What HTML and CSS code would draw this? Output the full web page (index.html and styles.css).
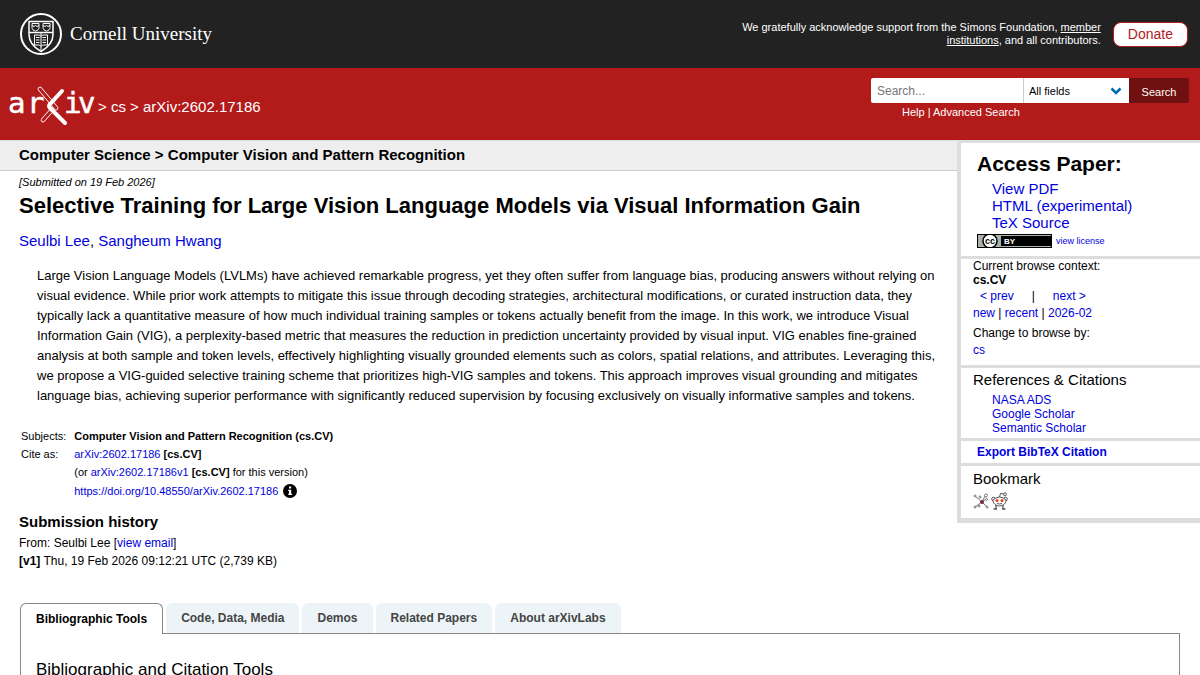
FILE: index.html
```
<!DOCTYPE html>
<html lang="en">
<head>
    <meta charset="UTF-8">
    <meta name="viewport" content="width=device-width, initial-scale=1">
    <title>[2602.17186] Selective Training for Large Vision Language Models via Visual Information Gain</title>
    <link rel="stylesheet" href="styles.css">
</head>
<body>
    <header>
        <div class="support-bar">
            <a class="cornell" href="#">
                <svg width="42" height="42" viewBox="0 0 42 42" fill="none" stroke="#fff" aria-hidden="true">
                    <circle cx="21" cy="21" r="20" stroke-width="2"/>
                    <path d="M9 8.500h24v13c0 8-5 13-12 17-7-4-12-9-12-17z" stroke-width="1.500"/>
                    <path d="M9 19.500h24" stroke-width="1.500"/>
                    <path d="M12 10.500h7v4c0 2-1.500 3-3.500 3.500-2-.5-3.500-1.500-3.500-3.500zM23 10.500h7v4c0 2-1.500 3-3.500 3.500-2-.5-3.500-1.500-3.500-3.500z"/>
                    <path d="M12 12.500l2 1 1.500-1 1.500 1 2-1M23 12.500l2 1 1.500-1 1.500 1 2-1"/>
                    <path d="M14.500 22h5l1.500 1.500 1.500-1.500h5v10h-5L21 33.500 19.500 32h-5zM21 19.500v18"/>
                    <path d="M16 24.500h3.500M16 27h3.500M16 29.500h3.500M22.500 24.500H26M22.500 27H26M22.500 29.500H26"/>
                </svg>
                <span>Cornell University</span>
            </a>
            <p class="support">We gratefully acknowledge support from the Simons Foundation, <a href="#">member institutions</a>, and all contributors.</p>
            <a class="donate" href="#">Donate</a>
        </div>
        <div class="banner">
            <div class="breadcrumbs">
                <a class="logo" href="#" aria-label="arXiv">
                    <svg width="86" height="40" viewBox="0 0 86 40">
                        <g fill="none" stroke-linecap="round">
                            <path d="M31 3L47 22" stroke="#fff" stroke-width="4.500"/>
                            <path d="M31 3L47 22" stroke="#b31b1b" stroke-width="3"/>
                            <path d="M34 34L43 24" stroke="#fff" stroke-width="4.500"/>
                            <path d="M34 34L43 24" stroke="#b31b1b" stroke-width="3"/>
                            <path d="M53 5L41 18Q39 20 41 22L56 37" stroke="#fff" stroke-width="4"/>
                        </g>
                        <text x="-1 18" y="27">ar</text>
                        <text x="55 69" y="27">iv</text>
                    </svg>
                </a>
                <span>&gt; <a href="#">cs</a> &gt; arXiv:2602.17186</span>
            </div>
            <form class="search" onsubmit="return false">
                <div class="search-row">
                    <input type="text" placeholder="Search..." aria-label="Search term">
                    <div class="select">
                        <select aria-label="Field to search">
                            <option>All fields</option>
                            <option>Title</option>
                            <option>Author</option>
                            <option>Abstract</option>
                        </select>
                        <svg width="12" height="8" viewBox="0 0 12 8" aria-hidden="true"><path d="M1.500 1.500L6 6l4.500-4.500" fill="none" stroke="#0068ac" stroke-width="2.500"/></svg>
                    </div>
                    <button>Search</button>
                </div>
                <p><a href="#">Help</a> | <a href="#">Advanced Search</a></p>
            </form>
        </div>
    </header>

    <div class="page">
        <main>
            <div class="subject">Computer Science &gt; Computer Vision and Pattern Recognition</div>
            <article>
                <div class="dateline">[Submitted on 19 Feb 2026]</div>
                <h1>Selective Training for Large Vision Language Models via Visual Information Gain</h1>
                <div class="authors"><a href="#">Seulbi Lee</a>, <a href="#">Sangheum Hwang</a></div>
                <blockquote>Large Vision Language Models (LVLMs) have achieved remarkable progress, yet they often suffer from language bias, producing answers without relying on visual evidence. While prior work attempts to mitigate this issue through decoding strategies, architectural modifications, or curated instruction data, they typically lack a quantitative measure of how much individual training samples or tokens actually benefit from the image. In this work, we introduce Visual Information Gain (VIG), a perplexity-based metric that measures the reduction in prediction uncertainty provided by visual input. VIG enables fine-grained analysis at both sample and token levels, effectively highlighting visually grounded elements such as colors, spatial relations, and attributes. Leveraging this, we propose a VIG-guided selective training scheme that prioritizes high-VIG samples and tokens. This approach improves visual grounding and mitigates language bias, achieving superior performance with significantly reduced supervision by focusing exclusively on visually informative samples and tokens.</blockquote>
                <table class="meta">
                    <tr>
                        <td>Subjects:</td>
                        <td><b>Computer Vision and Pattern Recognition (cs.CV)</b></td>
                    </tr>
                    <tr>
                        <td>Cite as:</td>
                        <td><a href="#">arXiv:2602.17186</a> <b>[cs.CV]</b></td>
                    </tr>
                    <tr>
                        <td></td>
                        <td>(or <a href="#">arXiv:2602.17186v1</a> <b>[cs.CV]</b> for this version)</td>
                    </tr>
                    <tr>
                        <td></td>
                        <td class="doi">
                            <a href="#">https://doi.org/10.48550/arXiv.2602.17186</a>
                            <svg width="14" height="14" viewBox="0 0 14 14" aria-hidden="true">
                                <circle cx="7" cy="7" r="7"/>
                                <path d="M6 2.500h2.200v2H6zM5.200 5.700h3v4h.8v1.300H5.200V9.700H6V7h-.8z" fill="#fff"/>
                            </svg>
                        </td>
                    </tr>
                </table>
                <section class="history">
                    <h2>Submission history</h2>
                    <p>From: Seulbi Lee [<a href="#">view email</a>]</p>
                    <p><b>[v1]</b> Thu, 19 Feb 2026 09:12:21 UTC (2,739 KB)</p>
                </section>
            </article>
        </main>

        <aside>
            <section class="access">
                <h2>Access Paper:</h2>
                <ul>
                    <li><a href="#">View PDF</a></li>
                    <li><a href="#">HTML (experimental)</a></li>
                    <li><a href="#">TeX Source</a></li>
                </ul>
                <div class="license">
                    <svg width="75" height="14" viewBox="0 0 75 14" role="img" aria-label="Creative Commons Attribution">
                        <rect width="75" height="14" fill="#000"/>
                        <rect x="1" y="1" width="73" height="12" fill="#aab2ab"/>
                        <rect x="24" y="2" width="50" height="10" fill="#000"/>
                        <circle cx="13" cy="7" r="8" fill="#aab2ab"/>
                        <circle cx="13" cy="7" r="7" fill="#fff" stroke="#000" stroke-width="1.500"/>
                        <text x="8" y="10" class="cc">cc</text>
                        <text x="27" y="10" class="by">BY</text>
                        <rect x=".5" y=".5" width="74" height="13" fill="none" stroke="#000"/>
                    </svg>
                    <a href="#">view license</a>
                </div>
            </section>
            <section class="browse">
                <p>Current browse context:</p>
                <p><b>cs.CV</b></p>
                <div class="prevnext"><a href="#">&lt; prev</a><span>|</span><a href="#">next &gt;</a></div>
                <p class="list"><a href="#">new</a> | <a href="#">recent</a> | <a href="#">2026-02</a></p>
                <p class="change">Change to browse by:</p>
                <p><a href="#">cs</a></p>
            </section>
            <section class="refs">
                <h3>References &amp; Citations</h3>
                <ul>
                    <li><a href="#">NASA ADS</a></li>
                    <li><a href="#">Google Scholar</a></li>
                    <li><a href="#">Semantic Scholar</a></li>
                </ul>
            </section>
            <section class="export"><a href="#">Export BibTeX Citation</a></section>
            <section class="bookmark">
                <h3>Bookmark</h3>
                <div class="icons">
                    <a href="#" aria-label="BibSonomy">
                        <svg width="16" height="16" viewBox="0 0 16 16" fill="none" stroke="#777">
                            <path d="M2 3l7 6 3-6M9 9l-7 5M9 9l5 5M9 9l4-3"/>
                            <g fill="#fff"><circle cx="2" cy="3" r="1"/><circle cx="7" cy="4" r="1"/><circle cx="13" cy="2.500" r="1.500"/><circle cx="13.500" cy="6.500" r="1"/><circle cx="2" cy="14" r="1"/><circle cx="6" cy="13" r="1"/><circle cx="14" cy="14" r="1"/></g>
                            <circle cx="9" cy="9" r="1.500" fill="#a23" stroke="#634"/>
                        </svg>
                    </a>
                    <a href="#" aria-label="Reddit">
                        <svg width="17" height="18" viewBox="0 0 17 18" fill="#fff" stroke="#555">
                            <path d="M8.500 5l1-3.500 4 .5" fill="none"/>
                            <circle cx="14" cy="2.300" r="1.500"/>
                            <circle cx="2.500" cy="7" r="1.800"/><circle cx="14.500" cy="7" r="1.800"/>
                            <path d="M5 12v5M12 12v5M2.500 17H6M11 17h3.500" stroke-width="1.300"/>
                            <path d="M2 8Q8.500 2 15 8C15.500 11 12 14 8.500 14S1.500 11 2 8z"/>
                            <path d="M6 11.500q2.500 1 5 0" fill="none"/>
                            <g fill="#f43b17" stroke="none"><circle cx="6" cy="8.500" r="1.500"/><circle cx="11" cy="8.500" r="1.500"/></g>
                        </svg>
                    </a>
                </div>
            </section>
        </aside>
    </div>

    <div class="labs">
        <div class="tabs" role="tablist">
            <button class="tab active" role="tab" aria-selected="true">Bibliographic Tools</button>
            <button class="tab" role="tab">Code, Data, Media</button>
            <button class="tab" role="tab">Demos</button>
            <button class="tab" role="tab">Related Papers</button>
            <button class="tab" role="tab">About arXivLabs</button>
        </div>
        <div class="panel" role="tabpanel">
            <h2>Bibliographic and Citation Tools</h2>
        </div>
    </div>
</body>
</html>
```
FILE: styles.css
```
* {
    box-sizing: border-box;
}

body {
    margin: 0;
    background: #fff;
    color: #000;
    font-family: "Liberation Sans", Arial, Helvetica, sans-serif;
    font-size: 12px;
}

h1, h2, h3, p, ul, blockquote {
    margin: 0;
    padding: 0;
}

ul {
    list-style: none;
}

a {
    color: #0000dd;
    text-decoration: none;
}

svg {
    display: block;
    flex: none;
}

/* header */
.support-bar {
    display: flex;
    align-items: center;
    height: 68px;
    padding: 0 12px 0 20px;
    background: #222;
    color: #fff;
}

.cornell {
    display: flex;
    align-items: center;
    gap: 8px;
    margin-right: auto;
    color: #fff;
    font-family: "Liberation Serif", "Times New Roman", serif;
    font-size: 19px;
}

.support {
    width: 380px;
    font-size: 11px;
    line-height: 13px;
    text-align: right;
}

.support a {
    color: #fff;
    text-decoration: underline;
}

.donate {
    margin-left: 12px;
    padding: 0 14px;
    border: 1px solid #b31b1b;
    border-radius: 8px;
    background: #fff;
    color: #b31b1b;
    font-size: 14px;
    line-height: 23px;
}

.banner {
    display: flex;
    justify-content: space-between;
    height: 73px;
    padding: 10px 11px 0 9px;
    background: #b31b1b;
    border-bottom: 1px solid #ddd;
    color: #fff;
}

.banner a {
    color: #fff;
}

.breadcrumbs {
    display: flex;
    align-items: center;
    gap: 3px;
    height: 56px;
    font-size: 15px;
}

.logo text {
    fill: #fff;
    font-family: "DejaVu Sans Mono", monospace;
    font-size: 29px;
    stroke: #fff;
    stroke-width: .5;
}

.search-row {
    display: flex;
    height: 25px;
}

.search input,
.search select,
.search button {
    height: 25px;
    border: 0;
    border-radius: 0;
    font-family: inherit;
    font-size: 11px;
}

.search input {
    width: 152px;
    padding: 0 6px;
    border-radius: 2px 0 0 2px;
    color: #222;
    font-size: 12px;
}

.search input::placeholder {
    color: #757575;
}

.select {
    position: relative;
}

.select select {
    width: 106px;
    padding: 0 2px 0 5px;
    border-left: 1px solid #ccc;
    background: #fff;
    color: #000;
    appearance: none;
}

.select svg {
    position: absolute;
    top: 9px;
    right: 7px;
    pointer-events: none;
}

.search button {
    width: 60px;
    padding: 2px 0 0;
    border-radius: 0 2px 2px 0;
    background: #711010;
    color: #fff;
}

.search p {
    padding-left: 31px;
    font-size: 11px;
    line-height: 18px;
}

/* two columns */
.page {
    display: flex;
    align-items: flex-start;
}

main {
    flex: 1;
    min-width: 0;
}

.subject {
    padding: 0 19px 2px;
    background: #eee;
    border-bottom: 1px solid #ccc;
    font-size: 15px;
    font-weight: bold;
    line-height: 27px;
}

article {
    padding: 4px 19px 0;
}

.dateline {
    font-size: 11px;
    font-style: italic;
    line-height: 14px;
}

h1 {
    margin: 3px 0 10px;
    font-size: 22px;
    line-height: 27px;
}

.authors {
    font-size: 15px;
    line-height: 24px;
}

blockquote {
    padding: 13px 0 21px 18px;
    font-size: 13px;
    line-height: 20px;
}

.meta {
    border-spacing: 0;
    font-size: 11px;
}

.meta td {
    height: 18px;
    padding: 0 6px 0 2px;
}

.meta .doi {
    display: flex;
    align-items: center;
    gap: 5px;
    height: 20px;
}

.history {
    padding-top: 12px;
    line-height: 18px;
}

.history h2 {
    margin-bottom: 3px;
    font-size: 15px;
}

/* sidebar */
aside {
    width: 243px;
    border-top: 2px solid #ddd;
    border-left: 4px solid #ddd;
    border-bottom: 2px solid #ddd;
}

aside section {
    padding: 0 12px;
    border-bottom: 3px solid #ddd;
}

aside h3 {
    font-size: 15px;
    font-weight: normal;
    line-height: 20px;
}

aside .access {
    padding: 8px 16px;
}

.access h2 {
    font-size: 21px;
    line-height: 26px;
}

.access ul {
    padding: 3px 0 3px 15px;
    font-size: 15px;
    line-height: 17px;
}

.license {
    display: flex;
    align-items: center;
    gap: 4px;
    font-size: 9px;
}

.cc {
    font-size: 9px;
    font-weight: bold;
}

.by {
    fill: #fff;
    font-size: 8px;
    font-weight: bold;
}

aside .browse {
    padding-bottom: 8px;
    line-height: 14px;
}

.prevnext {
    display: flex;
    gap: 18px;
    padding: 2px 7px;
}

.browse .list {
    line-height: 17px;
}

.browse .change {
    padding: 3px 0 1px;
    line-height: 17px;
}

aside .refs {
    padding-top: 2px;
    padding-bottom: 3px;
}

.refs ul {
    padding: 3px 0 0 19px;
    line-height: 14px;
}

aside .export {
    padding: 0 16px;
    font-weight: bold;
    line-height: 22px;
}

aside .bookmark {
    padding-top: 3px;
    padding-bottom: 8px;
}

.icons {
    display: flex;
    align-items: center;
    gap: 2px;
    padding-top: 3px;
}

/* labs tabs */
.labs {
    padding: 33px 20px 0;
}

.tabs {
    display: flex;
    align-items: flex-start;
    gap: 3px;
}

.tab {
    height: 30px;
    padding: 0 15px;
    border: 0;
    border-radius: 6px 6px 0 0;
    background: #edf4f8;
    color: #444;
    font-family: inherit;
    font-size: 12px;
    font-weight: bold;
}

.tab.active {
    position: relative;
    height: 31px;
    margin-bottom: -1px;
    border: 1px solid #888;
    border-bottom: 0;
    background: #fff;
    color: #000;
}

.panel {
    padding: 25px 15px;
    border: 1px solid #888;
}

.panel h2 {
    font-size: 17px;
    font-weight: normal;
    line-height: 22px;
}
```
